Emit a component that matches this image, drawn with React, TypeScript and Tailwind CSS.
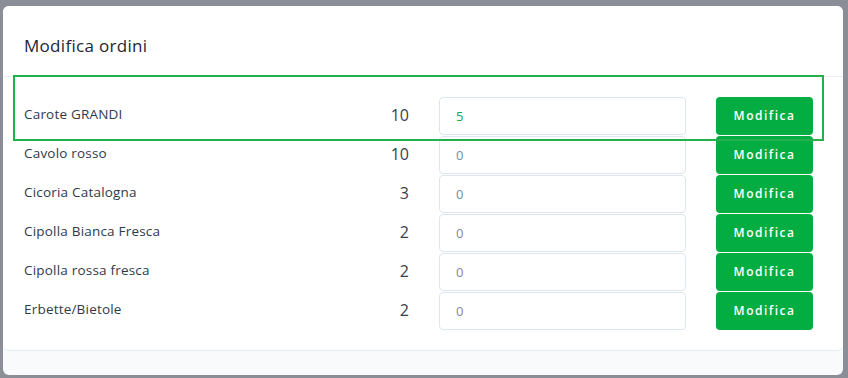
import React from 'react';

const rows = [
  { name: 'Carote GRANDI', qty: 10, value: '5' },
  { name: 'Cavolo rosso', qty: 10, value: '0' },
  { name: 'Cicoria Catalogna', qty: 3, value: '0' },
  { name: 'Cipolla Bianca Fresca', qty: 2, value: '0' },
  { name: 'Cipolla rossa fresca', qty: 2, value: '0' },
  { name: 'Erbette/Bietole', qty: 2, value: '0' },
];

export default function App() {
  return (
    <div
      className="w-[848px] h-[378px] bg-[#8b8e96] pt-[6px] pl-[3px] pr-[5px] pb-[3px]"
      style={{ fontFamily: '"Open Sans", "Liberation Sans", sans-serif' }}
    >
      <div className="relative h-full rounded-[6px] bg-[#f9fafb] overflow-hidden">
        <div className="bg-white rounded-b-[6px] border-b border-[#e6ebf2]">
          {/* Header */}
          <div className="h-[71px] border-b border-[#e9edf4] flex items-center pl-[21px] pt-[10px]">
            <h2 className="text-[17px] text-[#1e2533] tracking-[0.3px]">Modifica ordini</h2>
          </div>

          {/* Body */}
          <div className="pt-[19px] pb-[20px] pl-[21px] pr-[30px]">
            {rows.map((r, i) => (
              <div key={i} className="flex items-center h-[39px] gap-[30px]">
                <span className="flex-1 text-[13.5px] tracking-[0.2px] text-[#2f3a4c] -mt-[2px]">{r.name}</span>
                <span className="w-[40px] text-right text-[16px] text-[#353e50] -mt-[1px]">{r.qty}</span>
                <input
                  readOnly
                  value={r.value}
                  className={`w-[247px] h-[38px] rounded-[4px] border border-[#dfe5ee] px-[16px] text-[13px] outline-none ${
                    r.value === '5' ? 'text-[#22a648]' : 'text-[#7b8aa3]'
                  }`}
                />
                <button className="w-[97px] h-[38px] rounded-[4px] bg-[#03ad41] text-white text-[12px] font-semibold tracking-[1.5px]">
                  Modifica
                </button>
              </div>
            ))}
          </div>
        </div>

        {/* highlight annotation */}
        <div className="absolute left-[10px] top-[69px] w-[811px] h-[66px] border-2 border-[#22b14c] pointer-events-none" />
      </div>
    </div>
  );
}
